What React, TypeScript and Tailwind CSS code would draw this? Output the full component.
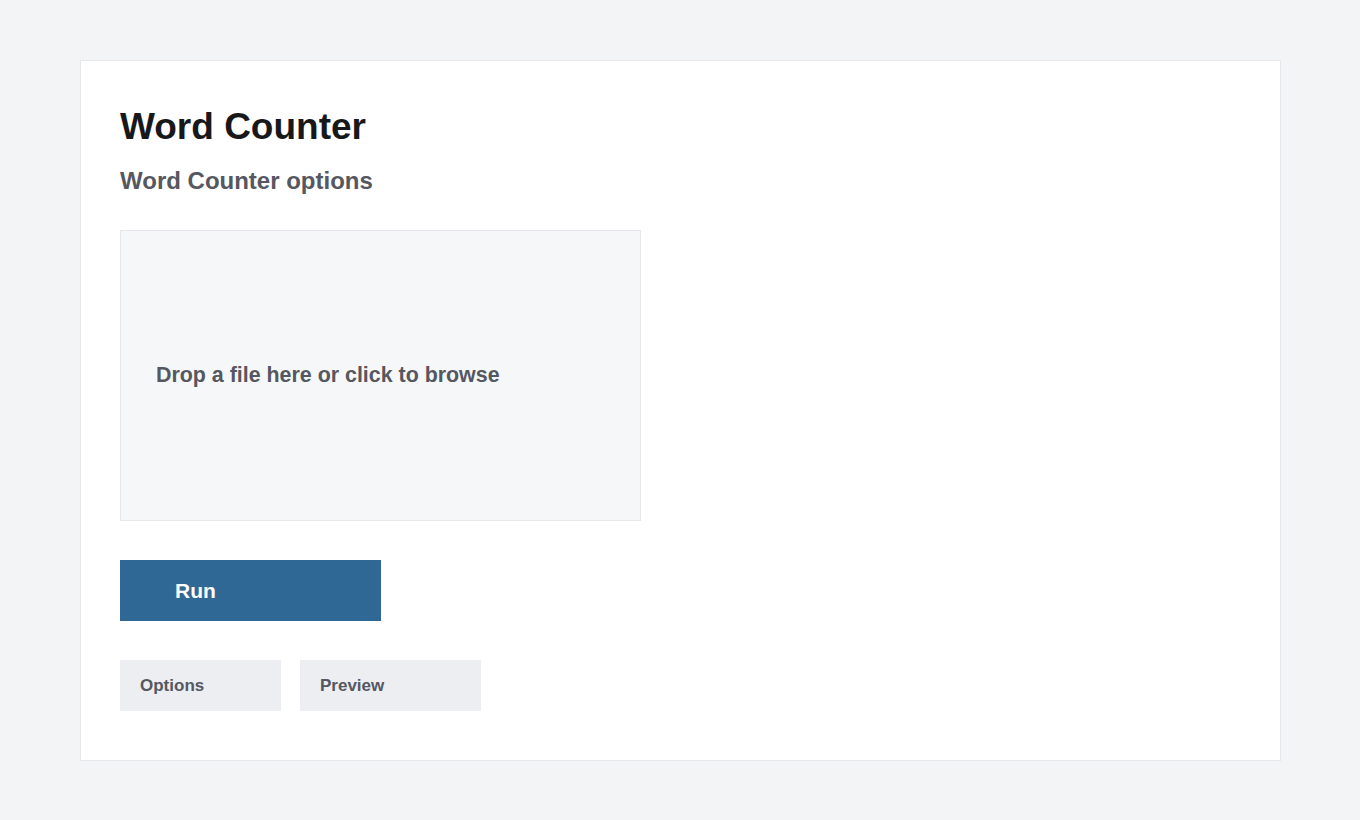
import React from "react";

export default function App() {
  return (
    <div
      className="min-h-screen bg-[#f3f4f6] px-20 py-[60px]"
      style={{ fontFamily: '"Liberation Sans", Arial, sans-serif' }}
    >
      <div className="h-[701px] w-[1201px] border border-[#e5e7eb] bg-white px-[39px] pt-[38px]">
        <h1 className="text-[37px] font-bold leading-[56px] text-[#18181b]">Word Counter</h1>
        <h2 className="mt-[14px] text-[24px] font-bold leading-[24px] text-[#555761]">
          Word Counter options
        </h2>

        <div className="mt-[37px] flex h-[291px] w-[521px] items-center border border-[#e5e7eb] bg-[#f6f7f8] pl-[35px]">
          <span className="text-[21.4px] font-bold text-[#555761]">
            Drop a file here or click to browse
          </span>
        </div>

        <button className="mt-[39px] flex h-[61px] w-[261px] items-center bg-[#2f6894] pl-[55px] text-[21px] font-bold text-white">
          Run
        </button>

        <div className="mt-[39px] flex gap-[19px]">
          <button className="flex h-[51px] w-[161px] items-center bg-[#eceef2] pl-5 text-[17px] font-bold text-[#555761]">
            Options
          </button>
          <button className="flex h-[51px] w-[181px] items-center bg-[#eceef2] pl-5 text-[17px] font-bold text-[#555761]">
            Preview
          </button>
        </div>
      </div>
    </div>
  );
}
